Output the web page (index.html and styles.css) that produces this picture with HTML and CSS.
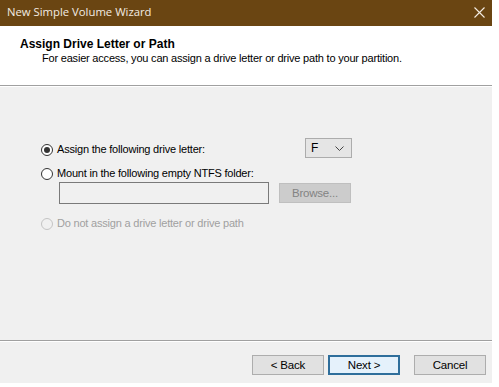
FILE: index.html
```html
<!DOCTYPE html>
<html>
<head>
<meta charset="utf-8">
<title>New Simple Volume Wizard</title>
<link rel="stylesheet" href="styles.css">
</head>
<body>
<div class="window">
  <div class="titlebar">
    <span class="title">New Simple Volume Wizard</span>
    <svg class="close" width="11" height="11" viewBox="0 0 11 11"><path d="M0.5 0.5 L10.5 10.5 M10.5 0.5 L0.5 10.5" stroke="#f4ede3" stroke-width="1.1" fill="none"/></svg>
  </div>
  <div class="header">
    <div class="h-title">Assign Drive Letter or Path</div>
    <div class="h-sub">For easier access, you can assign a drive letter or drive path to your partition.</div>
  </div>
  <div class="content">
    <div class="options">
      <div class="row row1">
        <label class="opt"><span class="radio checked"></span><span>Assign the following drive letter:</span></label>
        <div class="select"><span>F</span>
          <svg class="chev" width="9" height="5" viewBox="0 0 9 5"><path d="M0.5 0.5 L4.5 4.5 L8.5 0.5" stroke="#444" stroke-width="1" fill="none"/></svg>
        </div>
      </div>
      <div class="row row2">
        <label class="opt"><span class="radio"></span><span>Mount in the following empty NTFS folder:</span></label>
      </div>
      <div class="row row3">
        <div class="textbox"></div>
        <div class="btn disabled">Browse...</div>
      </div>
      <div class="row row4">
        <label class="opt dis"><span class="radio disabled"></span><span>Do not assign a drive letter or drive path</span></label>
      </div>
    </div>
  </div>
  <div class="footer">
    <div class="btn">&lt; Back</div>
    <div class="btn primary">Next &gt;</div>
    <div class="btn cancel">Cancel</div>
  </div>
</div>
</body>
</html>
```
FILE: styles.css
```css
html, body {
  margin: 0;
  padding: 0;
  background: #ffffff;
}
body {
  width: 499px;
  height: 387px;
  overflow: hidden;
  font-family: "Liberation Sans", Arial, sans-serif;
  font-size: 11px;
  letter-spacing: -0.2px;
  color: #000;
}
.window {
  width: 492px;
  height: 383px;
  display: flex;
  flex-direction: column;
  background: #f0f0f0;
}
.titlebar {
  height: 26px;
  flex: none;
  background: #6a4512;
  display: flex;
  align-items: center;
  padding: 0 7px 3px 7px;
  box-sizing: border-box;
}
.title {
  font-family: "Open Sans", "Noto Sans", sans-serif;
  font-size: 11.3px;
  letter-spacing: 0;
  color: #f3ece2;
  flex: 1;
}
.close {
  margin-top: 1px;
}
.header {
  height: 59px;
  flex: none;
  background: #ffffff;
  border-bottom: 1px solid #a0a0a0;
}
.h-title {
  font-weight: bold;
  font-size: 12px;
  letter-spacing: 0;
  padding: 11px 0 0 20px;
  line-height: 14px;
}
.h-sub {
  padding: 0 0 0 42px;
  line-height: 14px;
}
.content {
  flex: 1;
  border-bottom: 1px solid #a0a0a0;
  box-shadow: inset 0 1px 0 #ffffff;
}
.options {
  width: 311px;
  margin: 53px 0 0 41px;
  display: flex;
  flex-direction: column;
}
.row {
  display: flex;
  align-items: center;
}
.row1 {
  height: 20px;
  justify-content: space-between;
}
.row2 {
  height: 16px;
  margin-top: 6px;
}
.row3 {
  margin-top: 1px;
  padding-left: 18px;
  height: 22px;
  gap: 10px;
}
.row4 {
  height: 16px;
  margin-top: 11px;
}
.opt {
  display: flex;
  align-items: center;
  gap: 4px;
}
.opt.dis {
  color: #a0a0a0;
}
.radio {
  width: 12px;
  height: 12px;
  border-radius: 50%;
  border: 1px solid #333333;
  background: #ffffff;
  box-sizing: border-box;
  display: flex;
  align-items: center;
  justify-content: center;
  margin-top: 2px;
}
.radio.checked::after {
  content: "";
  width: 6px;
  height: 6px;
  border-radius: 50%;
  background: #333333;
}
.radio.disabled {
  border-color: #c4c4c4;
  background: #f0f0f0;
}
.select {
  width: 47px;
  height: 20px;
  box-sizing: border-box;
  background: #e5e5e5;
  border: 1px solid #acacac;
  display: flex;
  align-items: center;
  justify-content: space-between;
  padding: 0 7px 0 5px;
  font-size: 12px;
  margin-top: -2px;
}
.chev {
  margin-top: 1px;
}
.textbox {
  width: 210px;
  height: 22px;
  box-sizing: border-box;
  border: 1px solid #7a7a7a;
  background: #f0f0f0;
}
.btn {
  width: 72px;
  height: 20px;
  box-sizing: border-box;
  background: #e1e1e1;
  border: 1px solid #adadad;
  display: flex;
  align-items: center;
  justify-content: center;
  font-size: 11.5px;
}
.btn.disabled {
  background: #cccccc;
  border-color: #bfbfbf;
  color: #838383;
}
.btn.primary {
  border: 2px solid #2f6e9b;
  background: #e5f1fb;
}
.footer {
  height: 42px;
  flex: none;
  box-shadow: inset 0 1px 0 #ffffff;
  display: flex;
  align-items: flex-start;
  padding: 14px 0 0 252px;
  box-sizing: border-box;
  gap: 4px;
}
.btn.cancel {
  margin-left: 10px;
}
```
